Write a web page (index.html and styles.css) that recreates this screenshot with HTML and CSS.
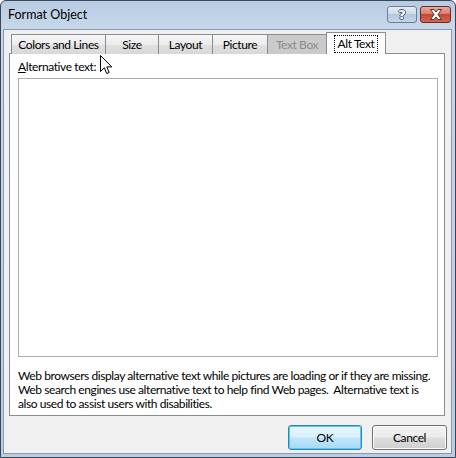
FILE: index.html
```html
<!DOCTYPE html>
<html>
<head>
<meta charset="utf-8">
<link rel="stylesheet" href="styles.css">
</head>
<body>
<div class="window">
  <div class="titlebar">
    <span class="title">Format Object</span>
    <div class="caption">
      <div class="cbtn help"><span class="q">?</span></div>
      <div class="cbtn close">
        <svg width="16" height="11" viewBox="0 0 16 11"><path d="M2.5 0.5 H6 L8 3 L10 0.5 H13.5 L10 5.5 L13.5 10.5 H10 L8 8 L6 10.5 H2.5 L6 5.5 Z" fill="#fff" stroke="#5a3028" stroke-width="1"/></svg>
      </div>
    </div>
  </div>
  <div class="client">
    <div class="tabs">
      <div class="tab t1">Colors and Lines</div>
      <div class="tab t2">Size</div>
      <div class="tab t3">Layout</div>
      <div class="tab t4">Picture</div>
      <div class="tab t5 disabled">Text Box</div>
      <div class="tab t6 selected"><span class="focus">Alt Text</span></div>
    </div>
    <div class="panel">
      <div class="label"><u>A</u>lternative text:</div>
      <div class="textarea"></div>
      <p class="desc">Web browsers display alternative text while pictures are loading or if they are missing.<br>Web search engines use alternative text to help find Web pages.&nbsp; Alternative text is<br>also used to assist users with disabilities.</p>
    </div>
    <div class="buttons">
      <div class="btn default">OK</div>
      <div class="btn">Cancel</div>
    </div>
  </div>
  <svg class="cursor" width="13" height="20" viewBox="0 0 13 20"><path d="M0.5 0.5 L0.5 16.5 L4.3 12.8 L6.8 18.5 L9.2 17.5 L6.8 11.9 L11.8 11.9 Z" fill="#fff" stroke="#000" stroke-width="1" stroke-linejoin="miter"/></svg>
</div>
</body>
</html>
```
FILE: styles.css
```css
* { box-sizing: border-box; }
html, body { margin: 0; padding: 0; background: #fff; }
body { font-family: Lato, "Liberation Sans", Arial, sans-serif; font-size: 12px; color: #000; }

.window {
  position: relative;
  width: 456px;
  height: 458px;
  border: 1px solid #3b4654;
  border-radius: 6px 6px 0 0;
  padding: 0 3px 3px 2px;
  background: linear-gradient(180deg, #b7cbe2 0px, #c8d8ea 28px, #b9cde3 100%);
  display: flex;
  flex-direction: column;
}

.titlebar {
  height: 28px;
  display: flex;
  align-items: flex-start;
  justify-content: space-between;
  padding-left: 5px;
}
.title { font-size: 12.5px; line-height: 12px; margin-top: 8px; color: #000; }

.caption { display: flex; gap: 3px; margin-top: 5px; margin-right: 1px; }
.cbtn {
  height: 17px;
  border-radius: 3px;
  display: flex;
  align-items: center;
  justify-content: center;
}
.help {
  width: 30px;
  border: 1px solid #6f7f93;
  background: linear-gradient(180deg, #e4ecf5 0%, #cddbea 45%, #b3c7de 50%, #c3d5e8 100%);
}
.q {
  font-family: "DejaVu Sans", sans-serif;
  font-weight: bold;
  font-size: 13px;
  line-height: 13px;
  color: #fff;
  text-shadow: 1px 0 0 #4a5566, -1px 0 0 #4a5566, 0 1px 0 #4a5566, 0 -1px 0 #4a5566;
}
.close {
  width: 31px;
  border: 1px solid #6a2c25;
  background: linear-gradient(180deg, #e9a99c 0%, #d77f6e 45%, #c24a36 50%, #d2654f 100%);
}

.client {
  flex: 1;
  background: #f0f0f0;
  border: 1px solid #8799ae;
  padding: 2px 0 0 5px;
  display: flex;
  flex-direction: column;
  letter-spacing: -0.4px;
}

.tabs {
  display: flex;
  align-items: flex-end;
  height: 22px;
  padding-left: 2px;
  margin-bottom: -1px;
  position: relative;
  z-index: 1;
}
.tab {
  height: 20px;
  border: 1px solid #898c95;
  border-bottom: none;
  margin-right: -1px;
  background: linear-gradient(180deg, #f6f6f6 0%, #ececec 50%, #e0e0e0 51%, #d8d8d8 100%);
  text-align: center;
  line-height: 19px;
  white-space: nowrap;
}
.t1 { width: 95px; }
.t2 { width: 54px; }
.t3 { width: 55px; }
.t4 { width: 56px; }
.t5 { width: 60px; }
.t6 { width: 60px; }
.tab.disabled {
  background: #cacaca;
  color: #8b8b8b;
}
.tab.selected {
  height: 22px;
  background: #fff;
  padding-top: 2px;
  line-height: 16px;
}
.focus {
  display: inline-block;
  border: 1px dotted #000;
  padding: 0 3px;
  line-height: 16px;
}

.panel {
  width: 436px;
  height: 363px;
  border: 1px solid #898c95;
  background: #fff;
  padding: 6px 0 0 8px;
}
.label { line-height: 14px; height: 14px; }
.textarea {
  margin-top: 4px;
  width: 420px;
  height: 279px;
  border: 1px solid #abadb3;
  background: #fff;
}
.desc {
  margin: 12px 0 0 0;
  line-height: 14px;
  font-size: 12px;
  letter-spacing: -0.42px;
  white-space: nowrap;
}

.buttons {
  display: flex;
  justify-content: flex-end;
  gap: 10px;
  margin-top: 9px;
  padding-right: 4px;
}
.btn {
  width: 74px;
  height: 25px;
  border: 1px solid #707070;
  border-radius: 3px;
  background: linear-gradient(180deg, #f4f4f4 0%, #ebebeb 48%, #dddddd 52%, #cfcfcf 100%);
  text-align: center;
  line-height: 23px;
  box-shadow: inset 0 0 0 1px #fbfbfb;
}
.btn + .btn { width: 75px; }
.btn.default {
  border-color: #3c7fb1;
  background: linear-gradient(180deg, #eaf6fd 0%, #d9f0fc 48%, #bee6fd 52%, #a7d9f5 100%);
  box-shadow: inset 0 0 0 1px #48d1f8;
}

.cursor {
  position: absolute;
  left: 99px;
  top: 54px;
}
```
